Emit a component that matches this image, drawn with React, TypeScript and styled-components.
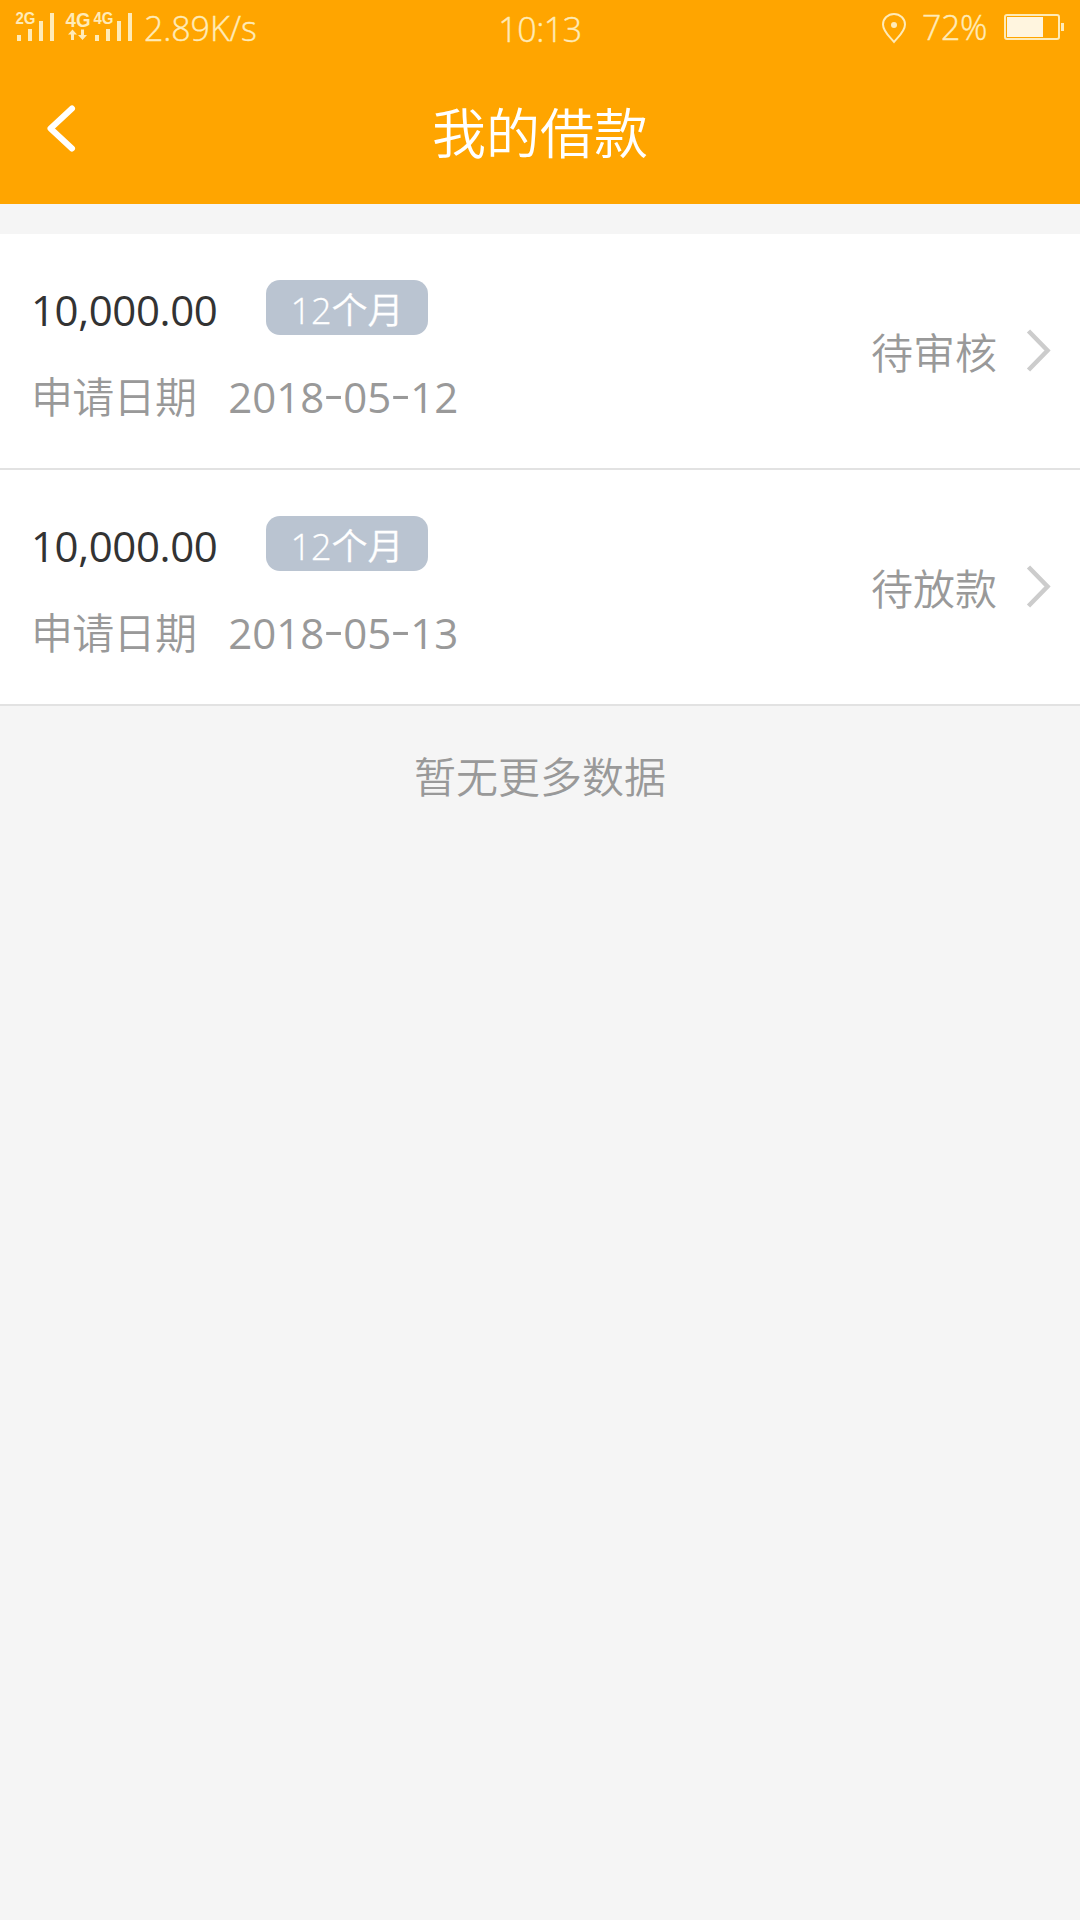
import React from "react";
import styled, { createGlobalStyle } from "styled-components";

const GlobalStyle = createGlobalStyle`
  * { box-sizing: border-box; }
  body {
    margin: 0;
    background: #f5f5f5;
    font-family: "Open Sans", "Noto Sans CJK SC", sans-serif;
    font-weight: 350;
  }
`;

const Screen = styled.div`
  width: 1080px;
  min-height: 1920px;
  background: #f5f5f5;
`;

const Top = styled.header`
  height: 204px;
  background: #ffa500;
`;

const StatusBar = styled.div`
  height: 56px;
  display: grid;
  grid-template-columns: 1fr auto 1fr;
  padding: 0 15px;
  color: #ffebb8;
`;

const StatusSide = styled.div<{ $end?: boolean }>`
  display: flex;
  justify-content: ${(p) => (p.$end ? "flex-end" : "flex-start")};
`;

const StatusText = styled.span<{ $top: number; $left?: number; $right?: number; $spacing?: number }>`
  padding-top: ${(p) => p.$top}px;
  margin-left: ${(p) => p.$left ?? 0}px;
  margin-right: ${(p) => p.$right ?? 0}px;
  font-family: "Open Sans", sans-serif;
  font-size: 34px;
  font-weight: 300;
  line-height: 40px;
  letter-spacing: ${(p) => p.$spacing ?? -0.4}px;
  -webkit-text-stroke: 0.4px currentColor;
  white-space: nowrap;
`;

const StatusIcon = styled.svg`
  display: block;
  flex: none;
`;

const NavBar = styled.div`
  height: 148px;
  display: grid;
  grid-template-columns: 120px 1fr 120px;
`;

const BackButton = styled.button`
  height: 144px;
  padding: 0 0 0 44px;
  border: 0;
  background: none;
  display: flex;
  align-items: center;
`;

const Title = styled.h1`
  margin: 0;
  color: #fff;
  font-size: 54px;
  font-weight: 350;
  line-height: 154px;
  text-align: center;
`;

const List = styled.ul`
  list-style: none;
  margin: 30px 0 0;
  padding: 0;
`;

const Row = styled.li`
  height: 236px;
  padding: 0 26px 0 31px;
  display: flex;
  justify-content: space-between;
  background: #fff;
  border-bottom: 2px solid #e2e2e2;
`;

const Info = styled.div`
  padding-top: 46px;
`;

const AmountLine = styled.div`
  height: 55px;
  display: flex;
`;

const Amount = styled.span`
  width: 235px;
  color: #333;
  font-size: 42px;
  font-weight: 400;
  letter-spacing: -0.4px;
  line-height: 60px;
`;

const Term = styled.span`
  width: 162px;
  height: 55px;
  border-radius: 14px;
  background: #bac4d1;
  color: #fff;
  font-size: 36px;
  line-height: 61px;
  text-align: center;
  -webkit-text-stroke: 0.3px currentColor;
`;

const DateLine = styled.div`
  display: flex;
  gap: 32px;
  margin-top: 32px;
  color: #999;
  font-size: 42px;
  line-height: 60px;
`;

const Label = styled.span`
  letter-spacing: -0.7px;
`;

const DateText = styled.span`
  display: flex;
  font-weight: 400;
`;

const Dash = styled.span`
  width: 19px;
  text-align: center;
  transform: translateY(-4px) scaleX(1.45);
`;

const Status = styled.div`
  display: flex;
  align-items: center;
  gap: 29px;
  color: #999;
  font-size: 42px;
  line-height: 60px;
`;

const StatusLabel = styled.span`
  padding-top: 4px;
`;

const Empty = styled.p`
  margin: 41px 0 0;
  color: #999;
  font-size: 42px;
  line-height: 60px;
  text-align: center;
`;

const Bars = ({ x }: { x: number }) => (
  <g>
    <rect x={x} y="35" width="4" height="6" />
    <rect x={x + 11} y="29" width="4" height="12" />
    <rect x={x + 22} y="21" width="4" height="20" />
    <rect x={x + 33} y="13" width="4" height="28" />
  </g>
);

const Signals = () => (
  <StatusIcon width="120" height="56" viewBox="15 0 120 56" fill="#ffebb8" fontFamily="Liberation Sans, sans-serif" fontWeight="700">
    <text x="15.5" y="24" fontSize="16" textLength="20" lengthAdjust="spacingAndGlyphs">2G</text>
    <Bars x={17} />
    <text x="65.5" y="27" fontSize="20" textLength="25" lengthAdjust="spacingAndGlyphs">4G</text>
    <path d="M68 34.5 72.5 29.5 77 34.5H74V40H71V34.5Z M78 35 82.5 40 87 35H84V29.5H81V35Z" />
    <text x="93.5" y="24" fontSize="16" textLength="20" lengthAdjust="spacingAndGlyphs">4G</text>
    <Bars x={95} />
  </StatusIcon>
);

const Pin = () => (
  <StatusIcon width="26" height="56" viewBox="881 0 26 56">
    <path d="M894 42C890 37 883 31.500 883 24.500A11 10.500 0 0 1 905 24.500C905 31.500 898 37 894 42Z" fill="none" stroke="#ffebb8" strokeWidth="2" />
    <circle cx="894" cy="25" r="3" fill="#ffebb8" />
  </StatusIcon>
);

const Battery = () => (
  <StatusIcon width="62" height="56" viewBox="1003 0 62 56">
    <rect x="1005" y="15" width="54" height="24" rx="2" fill="none" stroke="#ffebb8" strokeWidth="2" />
    <rect x="1007" y="17" width="36" height="20" fill="#fff5df" />
    <rect x="1061" y="23" width="3" height="8" fill="#ffebb8" />
  </StatusIcon>
);

const BackIcon = () => (
  <svg width="34" height="50" viewBox="44 103 34 50">
    <path d="M72 108.500 50.500 128.500 72 148.500" fill="none" stroke="#fff" strokeWidth="6" strokeLinecap="round" strokeLinejoin="round" />
  </svg>
);

const Chevron = () => (
  <svg width="28" height="46" viewBox="0 0 28 46">
    <path d="M2.500 3 21.500 22.500 2.500 42" fill="none" stroke="#ccc" strokeWidth="4.500" />
  </svg>
);

const loans = [
  { amount: "10,000.00", term: "12个月", date: "2018-05-12", status: "待审核" },
  { amount: "10,000.00", term: "12个月", date: "2018-05-13", status: "待放款" },
];

export default function App() {
  return (
    <Screen>
      <GlobalStyle />
      <Top>
        <StatusBar>
          <StatusSide>
            <Signals />
            <StatusText $top={8} $left={9} $spacing={-0.1}>2.89K/s</StatusText>
          </StatusSide>
          <StatusText $top={9}>10:13</StatusText>
          <StatusSide $end>
            <Pin />
            <StatusText $top={7} $left={15} $right={16}>72%</StatusText>
            <Battery />
          </StatusSide>
        </StatusBar>
        <NavBar>
          <BackButton aria-label="返回"><BackIcon /></BackButton>
          <Title>我的借款</Title>
        </NavBar>
      </Top>
      <List>
        {loans.map((loan) => (
          <Row key={loan.date}>
            <Info>
              <AmountLine>
                <Amount>{loan.amount}</Amount>
                <Term>{loan.term}</Term>
              </AmountLine>
              <DateLine>
                <Label>申请日期</Label>
                <DateText>
                  {loan.date.split("-").map((part, i) => (
                    <React.Fragment key={i}>
                      {i > 0 && <Dash>-</Dash>}
                      {part}
                    </React.Fragment>
                  ))}
                </DateText>
              </DateLine>
            </Info>
            <Status>
              <StatusLabel>{loan.status}</StatusLabel>
              <Chevron />
            </Status>
          </Row>
        ))}
      </List>
      <Empty>暂无更多数据</Empty>
    </Screen>
  );
}
